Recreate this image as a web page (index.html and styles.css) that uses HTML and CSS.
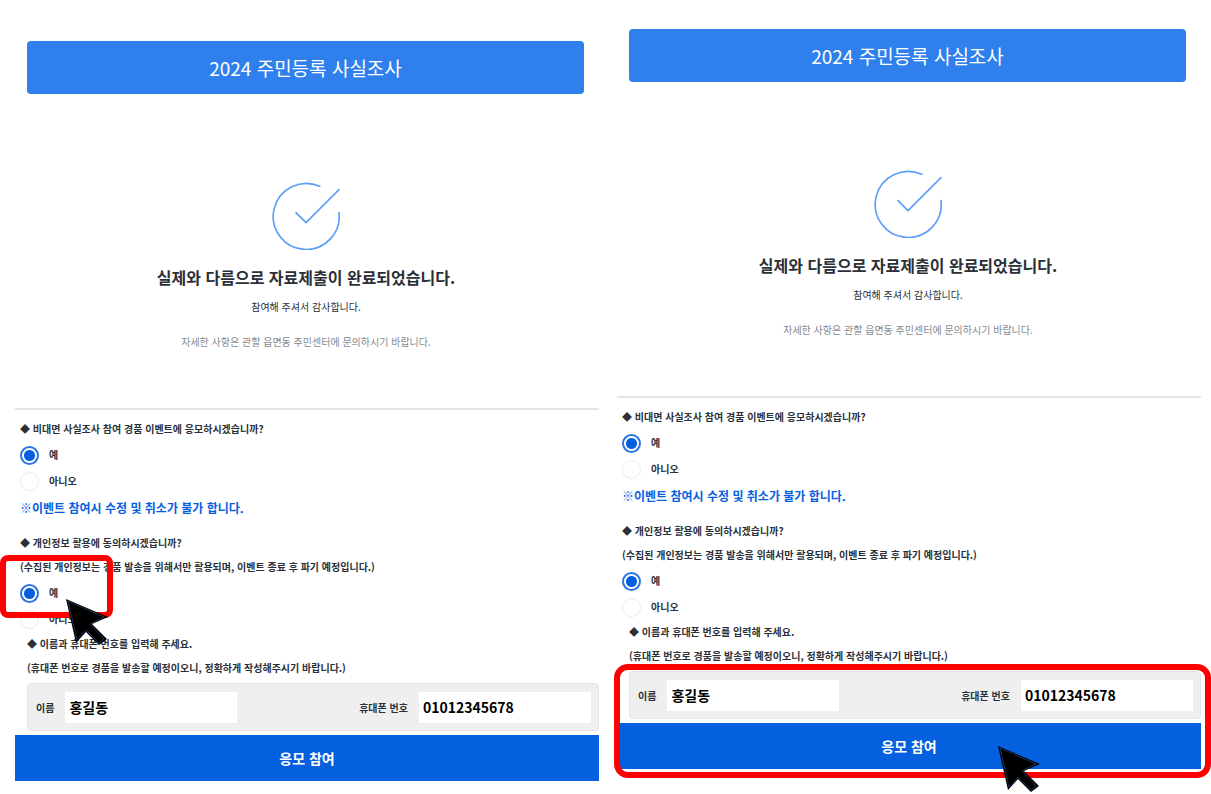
FILE: index.html
```html
<!DOCTYPE html>
<html lang="ko">
<head>
    <meta charset="UTF-8">
    <meta name="viewport" content="width=device-width, initial-scale=1.0">
    <title>2024 주민등록 사실조사</title>
    <link rel="stylesheet" href="styles.css">
</head>
<body>

    <main class="steps">
        <section class="panel">
            <h1 class="banner">2024 주민등록 사실조사</h1>

            <div class="result">
                <svg class="check-icon" viewBox="0 0 204 204" aria-hidden="true">
                    <path d="M143 13 A99 99 0 1 0 201 92"/>
                    <path d="M72 92 L102 122 L201 23"/>
                </svg>
                <h2>실제와 다름으로 자료제출이 완료되었습니다.</h2>
                <p class="thanks">참여해 주셔서 감사합니다.</p>
                <p class="guide">자세한 사항은 관할 읍면동 주민센터에 문의하시기 바랍니다.</p>
            </div>

            <form class="event-form">
                <div class="question">
                    <p>◆ 비대면 사실조사 참여 경품 이벤트에 응모하시겠습니까?</p>
                    <div class="choices">
                        <label><input type="radio" name="join" checked>예</label>
                        <label><input type="radio" name="join">아니오</label>
                    </div>
                    <p class="notice">※이벤트 참여시 수정 및 취소가 불가 합니다.</p>
                </div>

                <div class="question agree">
                    <p>◆ 개인정보 활용에 동의하시겠습니까?</p>
                    <p>(수집된 개인정보는 경품 발송을 위해서만 활용되며, 이벤트 종료 후 파기 예정입니다.)</p>
                    <div class="choices">
                        <label><input type="radio" name="agree" checked>예</label>
                        <label><input type="radio" name="agree">아니오</label>
                        <div class="mark mark-choice"></div>
                        <svg class="cursor cursor-choice" viewBox="0 0 42 47" aria-hidden="true">
                            <path class="cursor-body" d="M0 0 L42 18 L26 25 L41 40 L33 46 L20 33 L10 44 Z"/>
                            <path class="cursor-line" d="M2 2 L38 18 L24 25 L38 40 L33 44 L20 31 L11 41 Z"/>
                        </svg>
                    </div>
                </div>

                <div class="question contact">
                    <p>◆ 이름과 휴대폰 번호를 입력해 주세요.</p>
                    <p>(휴대폰 번호로 경품을 발송할 예정이오니, 정확하게 작성해주시기 바랍니다.)</p>
                </div>

                <div class="entry">
                    <div class="fields">
                        <label for="name-1">이름</label>
                        <input type="text" id="name-1" value="홍길동">
                        <label class="phone-label" for="phone-1">휴대폰 번호</label>
                        <input type="tel" id="phone-1" value="01012345678">
                    </div>
                    <button type="button" class="submit-btn">응모 참여</button>
                </div>
            </form>
        </section>

        <section class="panel panel-next">
            <h1 class="banner">2024 주민등록 사실조사</h1>

            <div class="result">
                <svg class="check-icon" viewBox="0 0 204 204" aria-hidden="true">
                    <path d="M143 13 A99 99 0 1 0 201 92"/>
                    <path d="M72 92 L102 122 L201 23"/>
                </svg>
                <h2>실제와 다름으로 자료제출이 완료되었습니다.</h2>
                <p class="thanks">참여해 주셔서 감사합니다.</p>
                <p class="guide">자세한 사항은 관할 읍면동 주민센터에 문의하시기 바랍니다.</p>
            </div>

            <form class="event-form">
                <div class="question">
                    <p>◆ 비대면 사실조사 참여 경품 이벤트에 응모하시겠습니까?</p>
                    <div class="choices">
                        <label><input type="radio" name="join" checked>예</label>
                        <label><input type="radio" name="join">아니오</label>
                    </div>
                    <p class="notice">※이벤트 참여시 수정 및 취소가 불가 합니다.</p>
                </div>

                <div class="question agree">
                    <p>◆ 개인정보 활용에 동의하시겠습니까?</p>
                    <p>(수집된 개인정보는 경품 발송을 위해서만 활용되며, 이벤트 종료 후 파기 예정입니다.)</p>
                    <div class="choices">
                        <label><input type="radio" name="agree" checked>예</label>
                        <label><input type="radio" name="agree">아니오</label>
                    </div>
                </div>

                <div class="question contact">
                    <p>◆ 이름과 휴대폰 번호를 입력해 주세요.</p>
                    <p>(휴대폰 번호로 경품을 발송할 예정이오니, 정확하게 작성해주시기 바랍니다.)</p>
                </div>

                <div class="entry">
                    <div class="fields">
                        <label for="name-2">이름</label>
                        <input type="text" id="name-2" value="홍길동">
                        <label class="phone-label" for="phone-2">휴대폰 번호</label>
                        <input type="tel" id="phone-2" value="01012345678">
                    </div>
                    <button type="button" class="submit-btn">응모 참여</button>
                    <div class="mark mark-entry"></div>
                    <svg class="cursor cursor-submit" viewBox="0 0 42 47" aria-hidden="true">
                        <path class="cursor-body" d="M0 0 L42 18 L26 25 L41 40 L33 46 L20 33 L10 44 Z"/>
                        <path class="cursor-line" d="M2 2 L38 18 L24 25 L38 40 L33 44 L20 31 L11 41 Z"/>
                    </svg>
                </div>
            </form>
        </section>
    </main>

</body>
</html>
```
FILE: styles.css
```css
* {
    box-sizing: border-box;
}
body {
    margin: 0;
    background-color: #fff;
    color: #2b2f38;
    font-family: "Noto Sans CJK KR", sans-serif;
    font-size: 10px;
}
h1, h2, p {
    margin: 0;
}
.steps {
    display: grid;
    grid-template-columns: 1fr 1fr;
    gap: 18px;
    padding: 0 10px 13px 15px;
}
.panel {
    padding-top: 41px;
}
.panel-next {
    padding-top: 29px;
}
.banner {
    margin: 0 15px 0 12px;
    border-radius: 4px;
    background-color: #2f80ed;
    color: white;
    font-size: 19px;
    font-weight: 400;
    line-height: 53px;
    text-align: center;
}
.result {
    padding: 88px 2px 56px 0;
    text-align: center;
}
.check-icon {
    display: block;
    width: 68px;
    height: 68px;
    margin: 0 auto 14px;
    fill: none;
    stroke: #5c9ef8;
    stroke-width: 5;
    stroke-linecap: round;
    stroke-linejoin: round;
}
.result h2 {
    font-size: 16px;
    font-weight: 700;
    line-height: 26px;
}
.thanks {
    margin-top: 7px;
    line-height: 20px;
}
.guide {
    margin-top: 15px;
    color: #85898e;
    line-height: 20px;
}
.event-form {
    border-top: 2px solid #e4e4e4;
    padding-top: 7px;
}
.question {
    padding-left: 5px;
    font-weight: 700;
    line-height: 24px;
}
.agree {
    margin-top: 10px;
}
.contact {
    padding-left: 12px;
}
.choices {
    position: relative;
    padding-top: 1px;
}
.choices label {
    display: flex;
    align-items: center;
    gap: 10px;
    height: 26px;
}
.choices input {
    appearance: none;
    width: 19px;
    height: 19px;
    margin: 0;
    border: 1px solid #ececec;
    border-radius: 50%;
    background-color: white;
}
.choices input:checked {
    border: 2px solid #2b74e4;
    background: radial-gradient(circle, #0560df 5px, white 6px);
}
.notice {
    color: #0560df;
    font-size: 12px;
    font-weight: 700;
    line-height: 27px;
}
.entry {
    position: relative;
    margin-top: 3px;
}
.fields {
    display: flex;
    align-items: center;
    height: 48px;
    margin: 0 0 4px 12px;
    padding: 0 7px 0 8px;
    border: 1px solid #e3e3e3;
    border-radius: 4px;
    background-color: #efefef;
    font-weight: 700;
}
.fields input {
    width: 31%;
    height: 31px;
    margin-left: 11px;
    padding: 0 4px;
    border: none;
    background-color: white;
    color: black;
    font-family: inherit;
    font-size: 14px;
    font-weight: 700;
}
.phone-label {
    margin-left: auto;
}
.submit-btn {
    display: block;
    width: 100%;
    height: 46px;
    border: none;
    background-color: #0560df;
    color: white;
    font-family: inherit;
    font-size: 14px;
    font-weight: 700;
    cursor: pointer;
}

/* red frames and pointers over the form */
.mark {
    position: absolute;
    border: 6px solid #f00;
    pointer-events: none;
}
.mark-choice {
    top: -24px;
    left: -20px;
    width: 113px;
    height: 63px;
    border-radius: 8px;
}
.mark-entry {
    top: -7px;
    right: -10px;
    bottom: -9px;
    left: -3px;
    border-radius: 14px;
}
.cursor {
    position: absolute;
    width: 42px;
    height: 47px;
    pointer-events: none;
}
.cursor-choice {
    top: 20px;
    left: 46px;
}
.cursor-submit {
    top: 75px;
    right: 161px;
}
.cursor-body {
    fill: black;
}
.cursor-line {
    fill: none;
    stroke: #1c3354;
    stroke-width: 1;
}
```
